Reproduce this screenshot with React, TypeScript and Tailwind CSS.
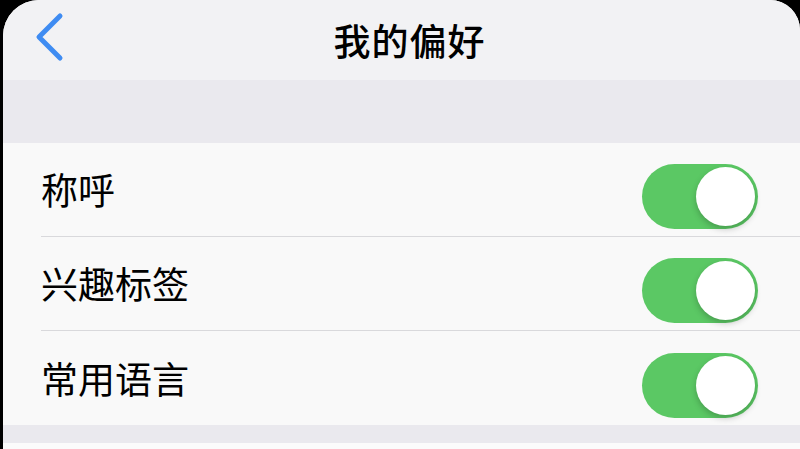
import React, { useState } from 'react'

const rows = ['称呼', '兴趣标签', '常用语言']

function Toggle({ on, onClick }: { on: boolean; onClick: () => void }) {
  return (
    <button
      onClick={onClick}
      className={`relative w-[116px] h-[65px] rounded-full shrink-0 mt-[14px] ${on ? 'bg-[#5bc864]' : 'bg-[#e5e5ea]'}`}
    >
      <span
        className={`absolute top-[3px] w-[59px] h-[59px] rounded-full bg-white shadow-[0_3px_6px_rgba(0,0,0,0.22)] ${on ? 'right-[3px]' : 'left-[3px]'}`}
      />
    </button>
  )
}

export default function App() {
  const [state, setState] = useState([true, true, true])

  const flip = (i: number) => setState(s => s.map((v, j) => (j === i ? !v : v)))

  return (
    <div
      className="w-[800px] h-[449px] overflow-hidden bg-black"
      style={{ fontFamily: '"Noto Sans CJK SC", "Noto Sans", sans-serif' }}
    >
      <div className="h-full flex flex-col bg-[#fbfbfb] rounded-tl-[36px] rounded-tr-[30px] ml-[3px]">
        <header className="h-[80px] shrink-0 relative flex items-center justify-center bg-[#f2f2f4] rounded-tl-[36px] rounded-tr-[30px]">
          <button className="absolute left-[30px] top-[12px] w-[34px] h-[50px] flex items-center justify-center">
            <svg width="30" height="50" viewBox="0 0 30 50" fill="none">
              <path
                d="M25 4 L4 25 L25 46"
                stroke="#3f8cf2"
                strokeWidth="5"
                strokeLinecap="round"
                strokeLinejoin="round"
              />
            </svg>
          </button>
          <h1 className="text-[37px] font-medium text-black tracking-[1px] leading-none ml-[16px]">我的偏好</h1>
        </header>

        <div className="h-[63px] shrink-0 bg-[#eae9ee]" />

        <div className="bg-[#f9f9f9]">
          {rows.map((label, i) => (
            <div key={label} className="pl-[38px]">
              <div
                className={`h-[94px] flex items-center justify-between pr-[42px] ${i < rows.length - 1 ? 'border-b border-[#d9d9dc]' : ''}`}
              >
                <span className="text-[37px] text-black leading-none">{label}</span>
                <Toggle on={state[i]} onClick={() => flip(i)} />
              </div>
            </div>
          ))}
        </div>

        <div className="h-[18px] shrink-0 bg-[#eae9ee]" />
        <div className="flex-1 bg-[#fbfbfb]" />
      </div>
    </div>
  )
}
